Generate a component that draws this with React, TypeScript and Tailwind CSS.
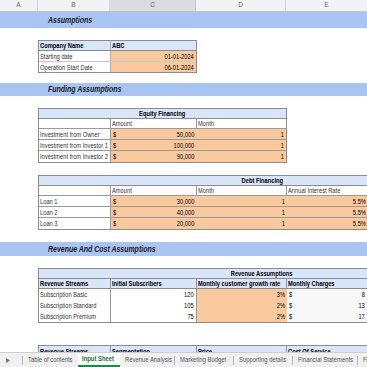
import React from "react";

const FONT = "font-['Liberation_Sans',Arial,sans-serif]";

function L({ children }: { children: React.ReactNode }) {
  return <span className="inline-block shrink-0 whitespace-nowrap origin-left scale-x-[0.82]">{children}</span>;
}
function R({ children }: { children: React.ReactNode }) {
  return <span className="inline-block shrink-0 whitespace-nowrap origin-right scale-x-[0.82]">{children}</span>;
}
function M({ children }: { children: React.ReactNode }) {
  return <span className="inline-block shrink-0 whitespace-nowrap origin-center scale-x-[0.82]">{children}</span>;
}

function C({ cls, children }: { cls: string; children?: React.ReactNode }) {
  return (
    <div className={`shrink-0 flex items-center overflow-hidden whitespace-nowrap leading-none ${cls}`}>
      {children}
    </div>
  );
}

function Band({ text, cls }: { text: string; cls: string }) {
  return (
    <div
      className={`w-full bg-[#a8c4f3] flex items-center pl-[48px] font-bold italic text-[8.5px] text-[#1a1a1a] leading-none ${cls}`}
    >
      <L>{text}</L>
    </div>
  );
}

function Money({ v, cls }: { v: string; cls: string }) {
  return (
    <C cls={`justify-between pl-[2px] pr-[3px] ${cls}`}>
      <L>$</L>
      <R>{v}</R>
    </C>
  );
}

function ColumnHeader() {
  return (
    <div className="flex h-[12px] bg-[#f3f3f3] border-b border-[#c4c4c4] text-[6.5px] text-[#666] leading-none">
      <div className="w-[38px] shrink-0 flex items-center justify-center border-r border-[#d6d6d6]">A</div>
      <div className="w-[72px] shrink-0 flex items-center justify-center border-r border-[#d6d6d6]">B</div>
      <div className="w-[86px] shrink-0 flex items-center justify-center border-r border-[#c4c4c4] bg-[#dcdcdc]">C</div>
      <div className="w-[90px] shrink-0 flex items-center justify-center border-r border-[#d6d6d6]">D</div>
      <div className="w-[81px] shrink-0 flex items-center justify-center">E</div>
    </div>
  );
}

function CompanyTable() {
  return (
    <div className="ml-[38px] mt-[12px] w-[159px] border border-[#8c8c8c] text-[7px]">
      <div className="flex h-[10px] bg-[#d9e5f8] border-b border-[#8c8c8c] font-bold text-black">
        <C cls="w-[72px] pl-[1px] border-r border-[#b0b0b0]"><L>Company Name</L></C>
        <C cls="w-[85px] pl-[1px]"><L>ABC</L></C>
      </div>
      <div className="flex h-[11px] border-b border-[#c9c9c9]">
        <C cls="w-[72px] pl-[1px] border-r border-[#b0b0b0] text-[#333]"><L>Starting date</L></C>
        <C cls="w-[85px] pr-[2px] justify-end bg-[#f9c99e]"><R>01-01-2024</R></C>
      </div>
      <div className="flex h-[10px]">
        <C cls="w-[72px] pl-[1px] border-r border-[#b0b0b0] text-[#333]"><L>Operation Start Date</L></C>
        <C cls="w-[85px] pr-[2px] justify-end bg-[#f9c99e]"><R>06-01-2024</R></C>
      </div>
    </div>
  );
}

function EquityTable() {
  const rows = [
    ["Investment from Owner", "50,000"],
    ["Investment from Investor 1", "100,000"],
    ["Investment from Investor 2", "90,000"],
  ];
  return (
    <div className="ml-[38px] mt-[12px] w-[249px] border border-[#8c8c8c] text-[7px]">
      <div className="flex h-[10px] bg-[#d9e5f8] border-b border-[#8c8c8c] font-bold justify-center items-center leading-none">
        <M>Equity Financing</M>
      </div>
      <div className="flex h-[10px] border-b border-[#9a9a9a]">
        <C cls="w-[72px] border-r border-[#9a9a9a]"></C>
        <C cls="w-[86px] pl-[1px] border-r border-[#9a9a9a] text-[#333]"><L>Amount</L></C>
        <C cls="w-[89px] pl-[1px] text-[#333]"><L>Month</L></C>
      </div>
      {rows.map((r, i) => (
        <div key={i} className={`flex h-[11px] ${i < 2 ? "border-b border-[#9a9a9a]" : ""}`}>
          <C cls="w-[72px] pl-[1px] border-r border-[#9a9a9a] text-[#333]"><L>{r[0]}</L></C>
          <Money v={r[1]} cls="w-[86px] bg-[#f9c99e]" />
          <C cls="w-[89px] pr-[2px] justify-end bg-[#f9c99e]"><R>1</R></C>
        </div>
      ))}
    </div>
  );
}

function DebtTable() {
  const rows = [
    ["Loan 1", "30,000"],
    ["Loan 2", "40,000"],
    ["Loan 3", "20,000"],
  ];
  return (
    <div className="ml-[38px] mt-[12px] w-[448px] border border-[#8c8c8c] text-[7px]">
      <div className="flex h-[10px] bg-[#d9e5f8] border-b border-[#8c8c8c] font-bold justify-center items-center leading-none">
        <M>Debt Financing</M>
      </div>
      <div className="flex h-[10px] border-b border-[#9a9a9a]">
        <C cls="w-[72px] border-r border-[#9a9a9a]"></C>
        <C cls="w-[86px] pl-[1px] border-r border-[#9a9a9a] text-[#333]"><L>Amount</L></C>
        <C cls="w-[90px] pl-[1px] border-r border-[#9a9a9a] text-[#333]"><L>Month</L></C>
        <C cls="w-[120px] pl-[1px] text-[#333]"><L>Annual Interest Rate</L></C>
      </div>
      {rows.map((r, i) => (
        <div key={i} className={`flex h-[11px] ${i < 2 ? "border-b border-[#9a9a9a]" : ""}`}>
          <C cls="w-[72px] pl-[1px] border-r border-[#9a9a9a] text-[#333]"><L>{r[0]}</L></C>
          <Money v={r[1]} cls="w-[86px] bg-[#f9c99e]" />
          <C cls="w-[90px] pr-[2px] justify-end bg-[#f9c99e]"><R>1</R></C>
          <C cls="w-[80px] pr-[1px] justify-end bg-[#f9c99e]"><R>5.5%</R></C>
          <C cls="w-[120px] bg-[#f9c99e]"></C>
        </div>
      ))}
    </div>
  );
}

function RevenueTable() {
  const rows = [
    ["Subscription Basic", "120", "3%", "8"],
    ["Subscription Standard", "105", "2%", "13"],
    ["Subscription Premium", "75", "2%", "17"],
  ];
  return (
    <div className="ml-[38px] mt-[12px] w-[448px] border border-[#8c8c8c] text-[7px]">
      <div className="flex h-[10px] bg-[#d9e5f8] border-b border-[#8c8c8c] font-bold justify-center items-center leading-none">
        <M>Revenue Assumptions</M>
      </div>
      <div className="flex h-[10px] bg-[#d9e5f8] border-b border-[#8c8c8c] font-bold">
        <C cls="w-[72px] pl-[1px] border-r border-[#9a9a9a]"><L>Revenue Streams</L></C>
        <C cls="w-[86px] pl-[1px] border-r border-[#9a9a9a]"><L>Initial Subscribers</L></C>
        <C cls="w-[90px] pl-[1px] border-r border-[#9a9a9a]"><L>Monthly customer growth rate</L></C>
        <C cls="w-[120px] pl-[1px]"><L>Monthly Charges</L></C>
      </div>
      {rows.map((r, i) => (
        <div key={i} className="flex h-[11px]">
          <C cls="w-[72px] pl-[1px] border-r border-[#9a9a9a] text-[#333]"><L>{r[0]}</L></C>
          <C cls="w-[86px] pr-[2px] justify-end border-r border-[#9a9a9a]"><R>{r[1]}</R></C>
          <C cls="w-[90px] pr-[2px] justify-end bg-[#f9c99e]"><R>{r[2]}</R></C>
          <Money v={r[3]} cls="w-[81px] bg-[#f8f8f8]" />
          <C cls="w-[120px] bg-[#f8f8f8]"></C>
        </div>
      ))}
    </div>
  );
}

function NextTable() {
  return (
    <div className="ml-[38px] mt-[22px] w-[448px] border border-[#8c8c8c] text-[7px]">
      <div className="flex h-[10px] bg-[#d9e5f8] font-bold">
        <C cls="w-[72px] pl-[1px] border-r border-[#9a9a9a]"><L>Revenue Streams</L></C>
        <C cls="w-[86px] pl-[1px] border-r border-[#9a9a9a]"><L>Segmentation</L></C>
        <C cls="w-[90px] pl-[1px] border-r border-[#9a9a9a]"><L>Price</L></C>
        <C cls="w-[120px] pl-[1px]"><L>Cost Of Service</L></C>
      </div>
    </div>
  );
}

function Sep() {
  return <div className="w-[1px] h-[9px] self-center bg-[#b8b8b8] shrink-0" />;
}

function Tab({ children, w }: { children: React.ReactNode; w: string }) {
  return <div className={`flex items-center overflow-hidden whitespace-nowrap shrink-0 pl-[5px] ${w}`}><L>{children}</L></div>;
}

function TabBar() {
  return (
    <div className="h-[15px] shrink-0 bg-[#f0f0f0] border-t border-[#cfcfcf] flex items-stretch text-[7.2px] text-[#555] leading-none overflow-hidden">
      <div className="w-[22px] shrink-0 flex items-center pl-[6px]">
        <svg width="4" height="5" viewBox="0 0 4 5">
          <path d="M0 0 L4 2.5 L0 5 Z" fill="#777" />
        </svg>
      </div>
      <Sep />
      <Tab w="w-[55px]">Table of contents</Tab>
      <div className="w-[42px] pl-[4px] flex items-center whitespace-nowrap shrink-0 bg-white border-b-[2px] border-[#1e8e3e] text-[#137333] font-bold">
        <L>Input Sheet</L>
      </div>
      <Tab w="w-[54px]">Revenue Analysis</Tab>
      <Sep />
      <Tab w="w-[58px]">Marketing Budget</Tab>
      <Sep />
      <Tab w="w-[58px]">Supporting details</Tab>
      <Sep />
      <Tab w="w-[64px]">Financial Statements</Tab>
      <Sep />
      <Tab w="w-[40px]">Financial</Tab>
    </div>
  );
}

export default function App() {
  return (
    <div className={`w-[367px] h-[367px] overflow-hidden bg-white flex flex-col text-black ${FONT}`}>
      <div className="h-[352px] shrink-0 overflow-hidden">
        <ColumnHeader />
        <Band text="Assumptions" cls="h-[16px]" />
        <CompanyTable />
        <Band text="Funding Assumptions" cls="h-[13px] mt-[10px]" />
        <EquityTable />
        <DebtTable />
        <Band text="Revenue And Cost Assumptions" cls="h-[14px] mt-[12px]" />
        <RevenueTable />
        <NextTable />
      </div>
      <TabBar />
    </div>
  );
}
